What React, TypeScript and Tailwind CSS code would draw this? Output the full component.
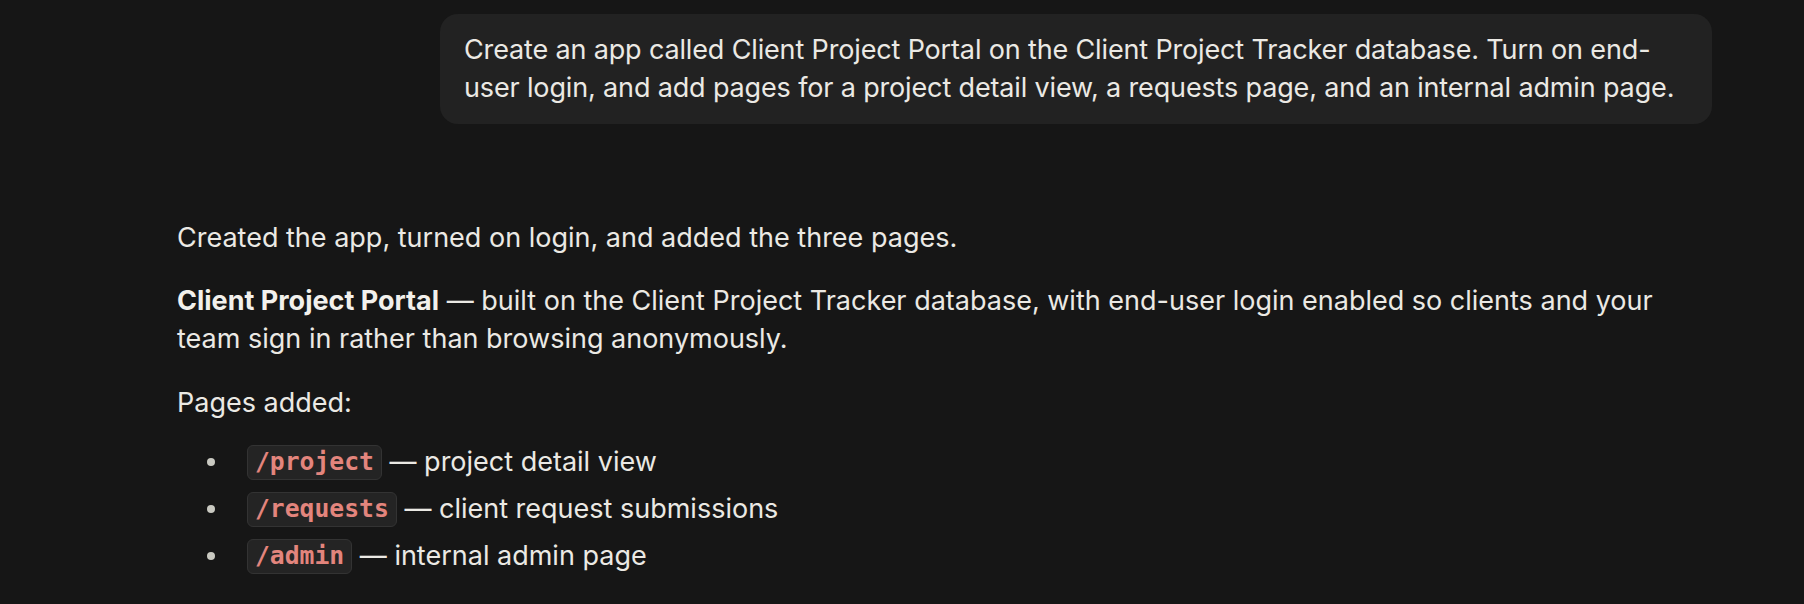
import React from "react";

const sans = { fontFamily: "Inter, 'Liberation Sans', sans-serif" };

function Code({ children }: { children: React.ReactNode }) {
  return (
    <span className="inline-flex items-center h-[35px] px-[7px] rounded-[6px] bg-[#242424] border border-[#333333] text-[#e3857d] font-bold text-[24.7px] leading-none [font-family:'DejaVu_Sans_Mono','Liberation_Mono',monospace]">
      {children}
    </span>
  );
}

function Item({ code, text }: { code: string; text: string }) {
  return (
    <li className="flex items-center h-[38px]">
      <span className="ml-[30px] w-[8px] h-[8px] rounded-full bg-[#c9c9c1]" />
      <span className="ml-[32px] flex items-center">
        <Code>{code}</Code>
        <span className="whitespace-pre"> — {text}</span>
      </span>
    </li>
  );
}

export default function App() {
  return (
    <div
      className="w-full h-[604px] bg-[#161616] text-[#ebe9e4] text-[27px] leading-[38px] overflow-hidden"
      style={sans}
    >
      <div className="w-[1535px] ml-[177px]">
        <div className="flex justify-end pt-[14px]">
          <div className="max-w-[1272px] bg-[#222222] rounded-[18px] px-[24px] py-[17px] tracking-[-0.15px]">
            Create an app called Client Project Portal on the Client Project Tracker database. Turn on end-user login, and add pages for a project detail view, a requests page, and an internal admin page.
          </div>
        </div>
        <div className="mt-[95px] flex flex-col">
          <p>Created the app, turned on login, and added the three pages.</p>
          <p className="mt-[25px]">
            <strong className="font-bold text-[#f2f0ec]">Client Project Portal</strong> — built on the Client Project Tracker database, with end-user login enabled so clients and your team sign in rather than browsing anonymously.
          </p>
          <p className="mt-[26px]">Pages added:</p>
          <ul className="mt-[21px] flex flex-col gap-[9px]">
            <Item code="/project" text="project detail view" />
            <Item code="/requests" text="client request submissions" />
            <Item code="/admin" text="internal admin page" />
          </ul>
        </div>
      </div>
    </div>
  );
}
